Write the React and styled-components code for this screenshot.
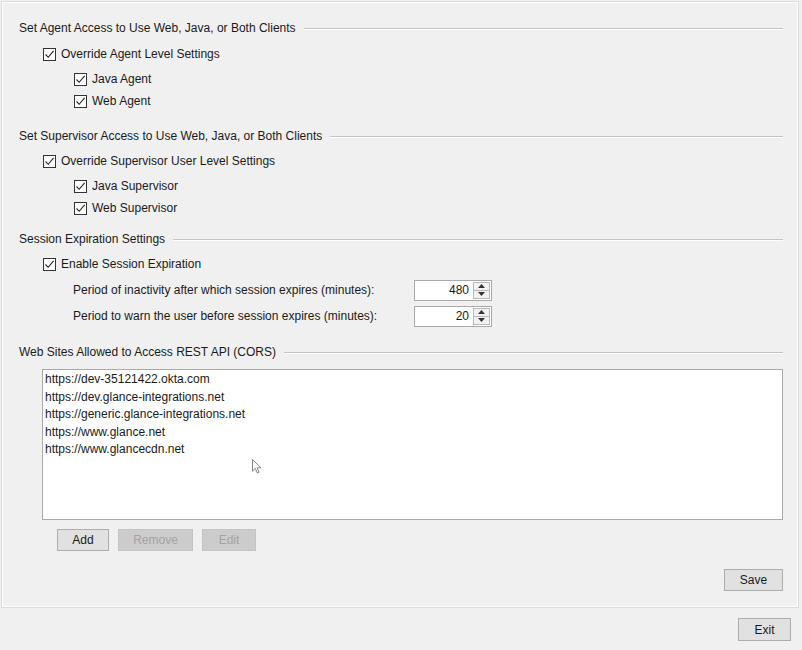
import React from 'react';
import styled, { createGlobalStyle } from 'styled-components';

const COLORS = {
  window: '#f0f0f0',
  text: '#1a1a1a',
  border: '#a9a9a9',
  button: '#e1e1e1',
  buttonBorder: '#adadad',
  disabled: '#cccccc',
  disabledText: '#a3a3a3',
};

const GlobalStyle = createGlobalStyle`
  body {
    margin: 0;
    background: ${COLORS.window};
    font-family: "Liberation Sans", Arial, sans-serif;
    font-size: 12px;
    color: ${COLORS.text};
  }
`;

const Page = styled.div`
  width: 802px;
  height: 650px;
  padding-top: 2px;
  box-sizing: border-box;
`;

const Panel = styled.div`
  margin-left: 2px;
  width: 796px;
  box-sizing: border-box;
  border: 1px solid #fff;
  box-shadow: 0 0 0 1px #dadada;
  padding: 15px 14px 15px 16px;
  display: flex;
  flex-direction: column;
`;

const Section = styled.section`
  display: flex;
  flex-direction: column;
  margin-top: ${p => p.$top || 0}px;
`;

const Header = styled.div`
  height: 20px;
  display: flex;
  align-items: center;
  gap: 8px;
  white-space: nowrap;

  &::after {
    content: '';
    flex: 1;
    border-top: 1px solid #c4c4c4;
    border-bottom: 1px solid #fff;
    margin-top: 1px;
  }
`;

const CheckRow = styled.label`
  height: 22px;
  display: flex;
  align-items: center;
  gap: 5px;
  margin-top: ${p => p.$top || 0}px;
  padding-left: ${p => p.$indent}px;
`;

const Box = styled.span`
  width: 13px;
  height: 13px;
  box-sizing: border-box;
  border: 1px solid #333;
  background: #fff;
  display: flex;
  align-items: center;
  justify-content: center;
`;

const SubGroup = styled.div`
  display: flex;
  flex-direction: column;
  margin-top: 3px;
`;

const SpinRow = styled.div`
  height: 22px;
  display: flex;
  align-items: center;
  padding-left: 54px;
  margin-top: 4px;
`;

const SpinLabel = styled.span`
  width: 341px;
`;

const Spinner = styled.div`
  width: 78px;
  height: 21px;
  box-sizing: border-box;
  border: 1px solid ${COLORS.border};
  background: #fff;
  display: flex;
`;

const SpinValue = styled.div`
  flex: 1;
  text-align: right;
  padding-right: 3px;
  line-height: 19px;
`;

const SpinButtons = styled.div`
  width: 17px;
  margin: 1px;
  display: flex;
  flex-direction: column;
  border: 1px solid #b9b9b9;
  box-sizing: border-box;
  background: #f2f2f2;
`;

const SpinButton = styled.div`
  flex: 1;
  display: flex;
  align-items: center;
  justify-content: center;
  & + & {
    border-top: 1px solid #b9b9b9;
  }
`;

const ListBox = styled.div`
  position: relative;
  margin: 7px 0 0 23px;
  height: 151px;
  box-sizing: border-box;
  border: 1px solid ${COLORS.border};
  background: #fff;
  padding: 1px 2px;
`;

const ListItem = styled.div`
  line-height: 17.5px;
  white-space: nowrap;
`;

const Cursor = styled.svg`
  position: absolute;
  left: 209px;
  top: 89px;
`;

const ButtonRow = styled.div`
  display: flex;
  gap: 9px;
  margin: 9px 0 0 38px;
`;

const Button = styled.button`
  height: ${p => p.$h || 22}px;
  width: ${p => p.$w}px;
  box-sizing: border-box;
  font: inherit;
  padding: 0;
  color: ${p => (p.disabled ? COLORS.disabledText : COLORS.text)};
  background: ${p => (p.disabled ? COLORS.disabled : COLORS.button)};
  border: 1px solid ${p => (p.disabled ? '#c4c4c4' : COLORS.buttonBorder)};
`;

const SaveRow = styled.div`
  display: flex;
  justify-content: flex-end;
  margin-top: 18px;
`;

const Footer = styled.div`
  display: flex;
  justify-content: flex-end;
  padding: 11px 11px 0 0;
`;

const Check = () => (
  <svg width="11" height="11" viewBox="0 0 11 11">
    <path d="M1.5 5.5 L4.2 8.3 L9.6 1.8" fill="none" stroke="#222" strokeWidth="1.1" />
  </svg>
);

const Checkbox = ({ children, indent, top }) => (
  <CheckRow $indent={indent} $top={top}>
    <Box><Check /></Box>
    {children}
  </CheckRow>
);

const Spin = ({ value }) => (
  <Spinner>
    <SpinValue>{value}</SpinValue>
    <SpinButtons>
      <SpinButton>
        <svg width="7" height="4" viewBox="0 0 7 4"><path d="M0 4 L3.5 0 L7 4Z" fill="#333" /></svg>
      </SpinButton>
      <SpinButton>
        <svg width="7" height="4" viewBox="0 0 7 4"><path d="M0 0 L3.5 4 L7 0Z" fill="#333" /></svg>
      </SpinButton>
    </SpinButtons>
  </Spinner>
);

const SITES = [
  'https://dev-35121422.okta.com',
  'https://dev.glance-integrations.net',
  'https://generic.glance-integrations.net',
  'https://www.glance.net',
  'https://www.glancecdn.net',
];

export default function App() {
  return (
    <Page>
      <GlobalStyle />
      <Panel>
        <Section>
          <Header>Set Agent Access to Use Web, Java, or Both Clients</Header>
          <Checkbox indent={24} top={5}>Override Agent Level Settings</Checkbox>
          <SubGroup>
            <Checkbox indent={55}>Java Agent</Checkbox>
            <Checkbox indent={55}>Web Agent</Checkbox>
          </SubGroup>
        </Section>

        <Section $top={14}>
          <Header>Set Supervisor Access to Use Web, Java, or Both Clients</Header>
          <Checkbox indent={24} top={4}>Override Supervisor User Level Settings</Checkbox>
          <SubGroup>
            <Checkbox indent={55}>Java Supervisor</Checkbox>
            <Checkbox indent={55}>Web Supervisor</Checkbox>
          </SubGroup>
        </Section>

        <Section $top={10}>
          <Header>Session Expiration Settings</Header>
          <Checkbox indent={24} top={4}>Enable Session Expiration</Checkbox>
          <SpinRow>
            <SpinLabel>Period of inactivity after which session expires (minutes):</SpinLabel>
            <Spin value="480" />
          </SpinRow>
          <SpinRow>
            <SpinLabel>Period to warn the user before session expires (minutes):</SpinLabel>
            <Spin value="20" />
          </SpinRow>
        </Section>

        <Section $top={15}>
          <Header>Web Sites Allowed to Access REST API (CORS)</Header>
          <ListBox>
            {SITES.map(s => <ListItem key={s}>{s}</ListItem>)}
            <Cursor width="11" height="16" viewBox="0 0 11 16">
              <path d="M0.5 0.5 L0.5 12 L3.3 9.4 L5.3 14 L7 13.2 L5.1 8.8 L9 8.8 Z" fill="#fff" stroke="#777" strokeWidth="0.9" />
            </Cursor>
          </ListBox>
          <ButtonRow>
            <Button $w={52}>Add</Button>
            <Button $w={75} disabled>Remove</Button>
            <Button $w={54} disabled>Edit</Button>
          </ButtonRow>
          <SaveRow>
            <Button $w={59}>Save</Button>
          </SaveRow>
        </Section>
      </Panel>
      <Footer>
        <Button $w={53} $h={23}>Exit</Button>
      </Footer>
    </Page>
  );
}
